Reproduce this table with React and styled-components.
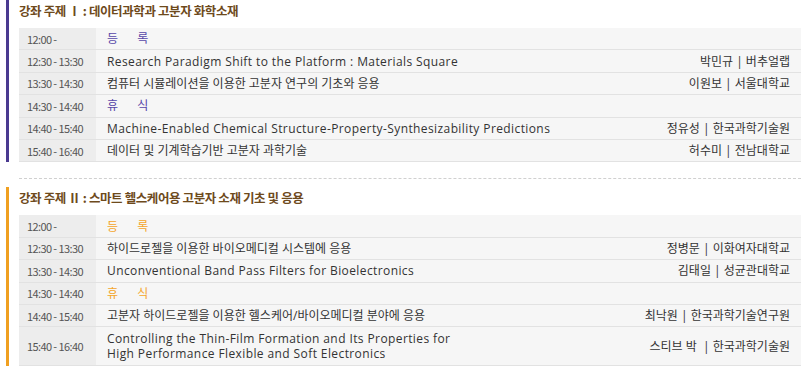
import React from "react";
import styled, { createGlobalStyle } from "styled-components";

const Global = createGlobalStyle`
  html, body { margin: 0; padding: 0; background: #fff; }
  body { font-family: "Open Sans", "Noto Sans CJK KR", sans-serif; color: #333; }
`;

const Page = styled.div`
  width: 809px;
  padding-bottom: 8px;
`;

const Section = styled.section`
  margin-left: 6px;
  padding: 3px 0 0 10px;
  border-left: 3px solid ${(p) => p.$accent};
`;

const Title = styled.h2`
  margin: 0 0 9px;
  font-family: "Noto Sans CJK KR", sans-serif;
  font-size: 12.5px;
  line-height: 16px;
  font-weight: 700;
  color: #6e4a1c;
  letter-spacing: -0.4px;
`;

const Table = styled.div`
  width: 782px;
  display: flex;
  flex-direction: column;
`;

const Row = styled.div`
  display: flex;
  border-bottom: 1px solid #e2e2e2;
  min-height: ${(p) => (p.$tall ? "38px" : "21.4px")};
`;

const Time = styled.div`
  width: 77px;
  flex: none;
  background: #ededed;
  display: flex;
  align-items: center;
  padding-left: 8px;
  box-sizing: border-box;
  font-family: "Noto Sans CJK KR", sans-serif;
  font-size: 11px;
  letter-spacing: -0.6px;
  color: #555;
`;

const Body = styled.div`
  flex: 1;
  background: #f6f6f6;
  display: flex;
  align-items: center;
  justify-content: space-between;
  padding: 0 11px;
  font-size: 12px;
  line-height: 15px;
`;

const Topic = styled.div`
  color: #333;
  letter-spacing: ${(p) => (p.$latin ? "0.4px" : "0")};
`;

const Break = styled.div`
  color: ${(p) => p.$color};
  word-spacing: 16px;
`;

const Speaker = styled.div`
  color: #333;
  white-space: pre;
  text-align: right;
`;

const Divider = styled.div`
  margin: 16px 0 8px 19px;
  width: 782px;
  border-top: 1px dashed #d0d0d0;
`;

const sections = [
  {
    accent: "#4a3a90",
    breakColor: "#5747a8",
    title: "강좌 주제 Ⅰ : 데이터과학과 고분자 화학소재",
    rows: [
      { time: "12:00 -", brk: "등 록" },
      { time: "12:30 - 13:30", topic: "Research Paradigm Shift to the Platform : Materials Square", latin: true, speaker: "박민규 | 버추얼랩" },
      { time: "13:30 - 14:30", topic: "컴퓨터 시뮬레이션을 이용한 고분자 연구의 기초와 응용", speaker: "이원보 | 서울대학교" },
      { time: "14:30 - 14:40", brk: "휴 식" },
      { time: "14:40 - 15:40", topic: "Machine-Enabled Chemical Structure-Property-Synthesizability Predictions", latin: true, speaker: "정유성 | 한국과학기술원" },
      { time: "15:40 - 16:40", topic: "데이터 및 기계학습기반 고분자 과학기술", speaker: "허수미 | 전남대학교" },
    ],
  },
  {
    accent: "#f0a020",
    breakColor: "#f4a52a",
    title: "강좌 주제 Ⅱ : 스마트 헬스케어용 고분자 소재 기초 및 응용",
    rows: [
      { time: "12:00 -", brk: "등 록" },
      { time: "12:30 - 13:30", topic: "하이드로젤을 이용한 바이오메디컬 시스템에 응용", speaker: "정병문 | 이화여자대학교" },
      { time: "13:30 - 14:30", topic: "Unconventional Band Pass Filters for Bioelectronics", latin: true, speaker: "김태일 | 성균관대학교" },
      { time: "14:30 - 14:40", brk: "휴 식" },
      { time: "14:40 - 15:40", topic: "고분자 하이드로젤을 이용한 헬스케어/바이오메디컬 분야에 응용", speaker: "최낙원 | 한국과학기술연구원" },
      {
        time: "15:40 - 16:40",
        topic: ["Controlling the Thin-Film Formation and Its Properties for", "High Performance Flexible and Soft Electronics"],
        latin: true,
        speaker: "스티브 박  | 한국과학기술원",
        tall: true,
      },
    ],
  },
];

function Session({ s }) {
  return (
    <Section $accent={s.accent}>
      <Title>{s.title}</Title>
      <Table>
        {s.rows.map((r, i) => (
          <Row key={i} $tall={r.tall}>
            <Time>{r.time}</Time>
            <Body>
              {r.brk ? (
                <Break $color={s.breakColor}>{r.brk}</Break>
              ) : (
                <>
                  <Topic $latin={r.latin}>
                    {Array.isArray(r.topic)
                      ? r.topic.map((t, j) => <div key={j}>{t}</div>)
                      : r.topic}
                  </Topic>
                  <Speaker>{r.speaker}</Speaker>
                </>
              )}
            </Body>
          </Row>
        ))}
      </Table>
    </Section>
  );
}

export default function App() {
  return (
    <Page>
      <Global />
      <Session s={sections[0]} />
      <Divider />
      <Session s={sections[1]} />
    </Page>
  );
}
